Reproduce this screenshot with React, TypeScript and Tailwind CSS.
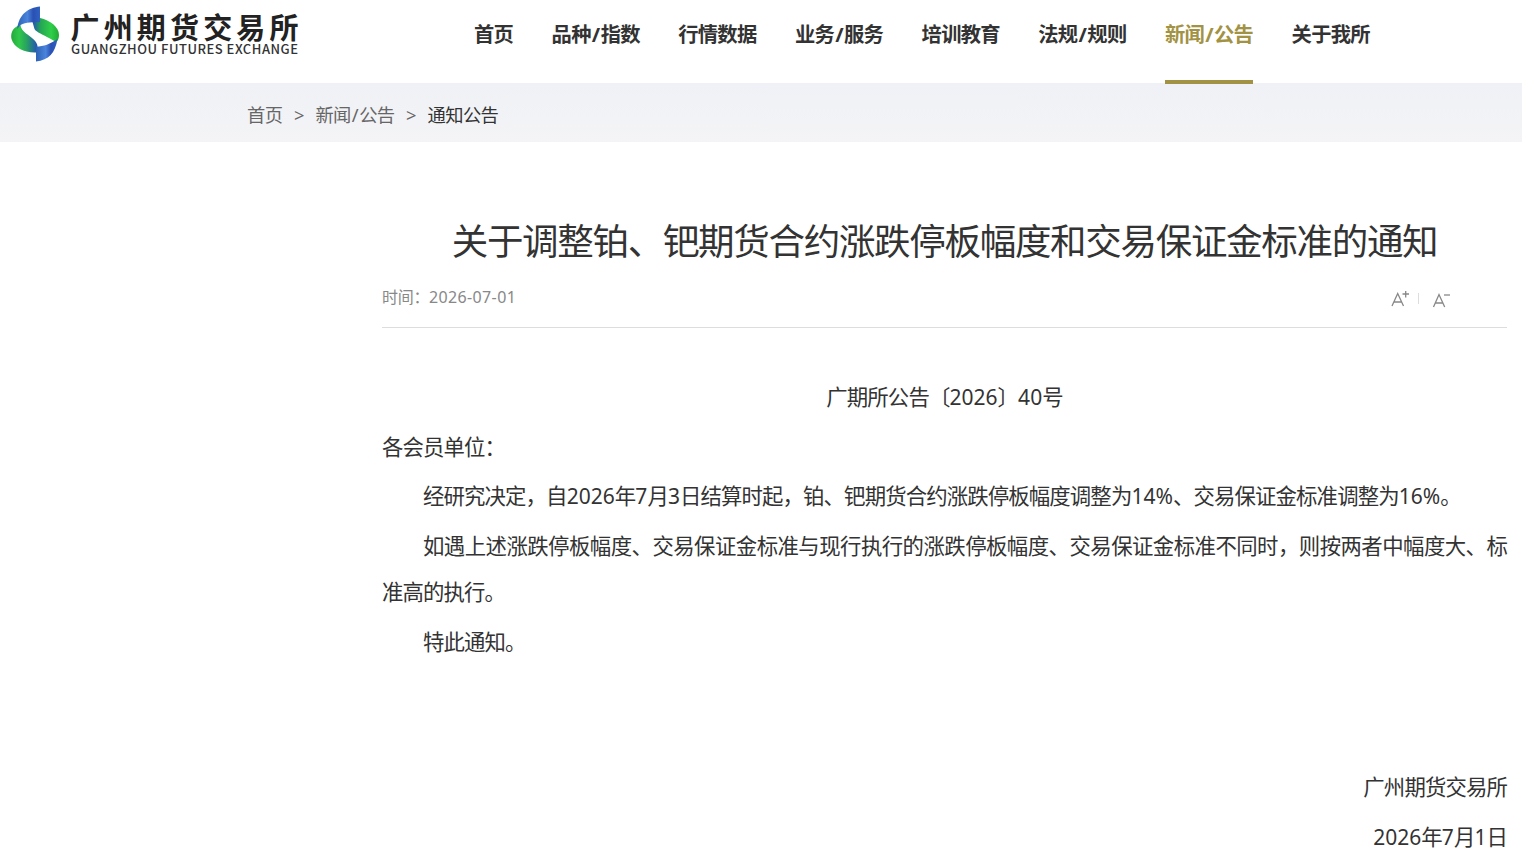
import type { ReactNode } from 'react';

const navItems = ['首页', '品种/指数', '行情数据', '业务/服务', '培训教育', '法规/规则', '新闻/公告', '关于我所'];
const activeItem = '新闻/公告';

function Logo() {
    return (
        <svg width="300" height="66" viewBox="0 0 300 66" className="shrink-0">
            <defs>
                <linearGradient id="topBlue" x1="0" y1="0" x2="1" y2="0">
                    <stop offset="0" stopColor="#2c62b4" />
                    <stop offset="0.45" stopColor="#4a84dc" />
                    <stop offset="0.7" stopColor="#2a50b4" />
                    <stop offset="1" stopColor="#2f62c0" />
                </linearGradient>
                <linearGradient id="leftGreen" x1="0" y1="0" x2="1" y2="0">
                    <stop offset="0" stopColor="#24a83c" />
                    <stop offset="0.3" stopColor="#2fc84a" />
                    <stop offset="0.6" stopColor="#27a062" />
                    <stop offset="1" stopColor="#2351b8" />
                </linearGradient>
                <linearGradient id="rightGreen" x1="0" y1="0" x2="1" y2="0">
                    <stop offset="0" stopColor="#2351b8" />
                    <stop offset="0.3" stopColor="#25a455" />
                    <stop offset="0.7" stopColor="#2fd048" />
                    <stop offset="1" stopColor="#22a838" />
                </linearGradient>
            </defs>
            <path d="M40 18C50 20 59 27 59 35C59 38 58 41 56 42L49 38C44 35 36 32 34.500 29L32.500 22Z" fill="url(#rightGreen)" />
            <path d="M17.500 26C12 29 10.500 34 11.500 39C14 48 25 53 36 52.500L37.500 46C37 41 31 37 26 33.500C23 31 20.500 28 20.500 25Z" fill="url(#leftGreen)" />
            <path d="M40 6.500C28 8 19 14 17.200 29L20.500 25C26 21.500 33 22.500 40 22Z" fill="url(#topBlue)" />
            <path d="M36 46.500C44 46.500 50 44 57.500 39C55 53 49 60 36 61.500Z" fill="url(#topBlue)" />
            <text x="70.500" y="38.500" textLength="228" lengthAdjust="spacing" className="fill-[#222222] font-['Noto_Sans_CJK_SC',sans-serif] text-[29px] font-bold">
                广州期货交易所
            </text>
            <text x="71" y="54" textLength="227" lengthAdjust="spacing" className="fill-[#333333] font-['Noto_Sans_CJK_SC',sans-serif] text-[13px] font-medium">
                GUANGZHOU FUTURES EXCHANGE
            </text>
        </svg>
    );
}

// opens up the slash between two section names
function Label({ text }: { text: string }) {
    const [first, second] = text.split('/');
    if (!second) return <>{text}</>;
    return (
        <>
            {first}
            <span className="mx-[1.1px]">/</span>
            {second}
        </>
    );
}

function Num({ children }: { children: ReactNode }) {
    return <span className="text-[21px] leading-none tracking-[0.02px]">{children}</span>;
}

function FontSizeButtons() {
    return (
        <svg width="60" height="18" viewBox="0 0 60 18" className="mt-[3px] mr-[56px]" fill="none" stroke="#888888" strokeWidth="1.3">
            <path d="M1 16L6.700 3.500L12.500 16M3 12H10.500" />
            <path d="M11.500 4H18M14.700 1V7.500" />
            <path d="M27.500 3V14" stroke="#dddddd" strokeWidth="1" />
            <path d="M42.500 17L48 4.500L53.700 17M44.500 13H52" />
            <path d="M53 5H59" />
        </svg>
    );
}

export default function App() {
    return (
        <div className="h-[850px] w-[1522px] overflow-hidden bg-white font-['Noto_Sans','Noto_Sans_CJK_SC',sans-serif] text-[#333333]">
            <header className="flex h-[83px]">
                <Logo />
                <nav className="ml-[174px] flex gap-[38.4px] text-[20.300px] leading-[68px] font-bold tracking-[-0.7px] whitespace-nowrap">
                    {navItems.map((item) => (
                        <a
                            key={item}
                            className={item === activeItem ? 'h-[84px] border-b-4 border-[#a29244] text-[#a29244]' : 'h-[84px]'}
                        >
                            <Label text={item} />
                        </a>
                    ))}
                </nav>
            </header>
            <div className="flex h-[59px] items-center bg-linear-to-b from-[#eff1f6] to-[#f4f4f6] pt-1 pl-[247px] text-[18.300px] tracking-[-0.6px] text-[#666666]">
                <span>首页</span>
                <span className="w-[33px] text-center">&gt;</span>
                <span><Label text="新闻/公告" /></span>
                <span className="w-[33px] text-center">&gt;</span>
                <span className="text-[#333333]">通知公告</span>
            </div>
            <main className="ml-[382px] w-[1125px] pt-[73px]">
                <h1 className="text-center text-[36.500px] leading-[52px] tracking-[-1.3px]">
                    关于调整铂、钯期货合约涨跌停板幅度和交易保证金标准的通知
                </h1>
                <div className="flex h-[61px] items-center justify-between border-b border-[#dddddd] text-[16px] tracking-[-0.3px] text-[#888888]">
                    <span>
                        时间：<span className="tracking-[0.35px]">2026-07-01</span>
                    </span>
                    <FontSizeButtons />
                </div>
                <article className="mt-[46px] text-[21.400px] leading-[46.200px] tracking-[-0.87px]">
                    <p className="mb-[3.600px] text-center">
                        广期所公告〔<Num>2026</Num>〕<Num>40</Num>号
                    </p>
                    <p className="mb-[3.400px]">各会员单位：</p>
                    <p className="mb-[3.600px] indent-[41px]">
                        经研究决定，自<Num>2026</Num>年<Num>7</Num>月<Num>3</Num>日结算时起，铂、钯期货合约涨跌停板幅度调整为<Num>14%</Num>、交易保证金标准调整为<Num>16%</Num>。
                    </p>
                    <p className="mb-[3.600px] text-justify indent-[41px]">
                        如遇上述涨跌停板幅度、交易保证金标准与现行执行的涨跌停板幅度、交易保证金标准不同时，则按两者中幅度大、标准高的执行。
                    </p>
                    <p className="indent-[41px]">特此通知。</p>
                    <p className="mt-[99px] text-right">广州期货交易所</p>
                    <p className="mt-[14px] text-right leading-[24px]">
                        <Num>2026</Num>年<Num>7</Num>月<Num>1</Num>日
                    </p>
                </article>
            </main>
        </div>
    );
}
